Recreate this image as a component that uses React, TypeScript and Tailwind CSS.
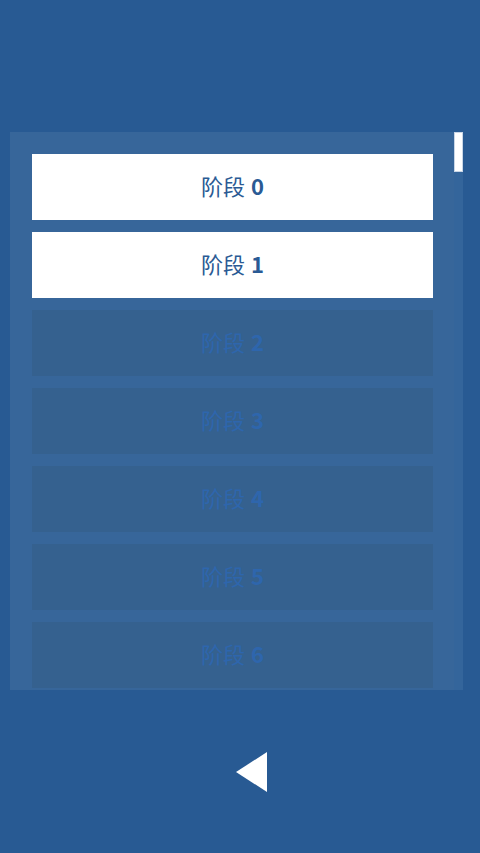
import React from 'react';

const stages = [0, 1, 2, 3, 4, 5, 6];
const unlocked = 2;

export default function App() {
  return (
    <div className="w-[480px] h-[853px] bg-[#285a93] flex flex-col overflow-hidden" style={{ fontFamily: '"Noto Sans CJK SC", "Open Sans", sans-serif' }}>
      <div className="mt-[132px] ml-[10px] w-[453px] h-[558px] bg-[#37669a] relative overflow-hidden">
        <div className="flex flex-col gap-3 pt-[22px] pl-[22px] pr-[30px]">
          {stages.map((n) => {
            const open = n < unlocked;
            return (
              <div
                key={n}
                className={`h-[66px] shrink-0 flex items-center justify-center pb-[4px] text-[22px] leading-none ${
                  open ? 'bg-white text-[#2a5a94]' : 'bg-[#35618f] text-[#2e66ad]'
                }`}
              >
                <span>阶段</span>
                <span className="ml-[6px] font-bold">{n}</span>
              </div>
            );
          })}
        </div>
        <div className="absolute right-0 top-0 w-[9px] h-full bg-[#34659b]">
          <div className="w-[9px] h-[40px] bg-white border border-[#c9d6e6]" />
        </div>
      </div>
      <div className="mt-[62px] ml-[236px]">
        <svg width="31" height="40" viewBox="0 0 31 40">
          <polygon points="0,20 31,0 31,40" fill="#ffffff" />
        </svg>
      </div>
    </div>
  );
}
